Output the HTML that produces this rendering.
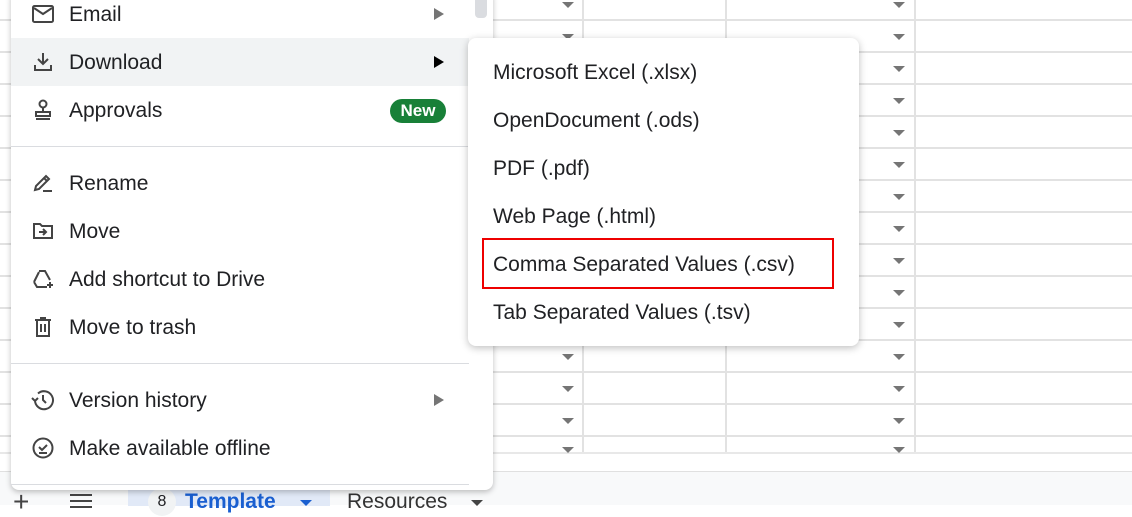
<!DOCTYPE html>
<html><head><style>
*{margin:0;padding:0;box-sizing:border-box}
body{width:1132px;height:505px;overflow:hidden;background:#fff;position:relative;font-family:"Liberation Sans",Arial,sans-serif;color:#202124}
.hl{position:absolute;left:0;width:1132px;height:2px;background:#e2e2e2}
.vl{position:absolute;top:0;height:452px;width:2px;background:#e2e2e2}
.arr{position:absolute;width:0;height:0;border-left:6px solid transparent;border-right:6px solid transparent;border-top:6px solid #757575}
.bar{position:absolute;left:0;top:471px;width:1132px;height:34px;background:#f8f9fa;border-top:1px solid #e0e0e0}
.menu{position:absolute;left:11px;top:-10px;width:482px;height:500px;background:#fff;border-radius:8px;box-shadow:0 2px 6px rgba(0,0,0,.25)}
.it{position:absolute;left:0;width:458px;height:48px;font-size:21px;line-height:50px}
.it span{position:absolute;left:58px}
.it svg{position:absolute;left:20px;top:12px}
.tri{position:absolute;left:423px;top:18px;width:0;height:0;border-top:6px solid transparent;border-bottom:6px solid transparent;border-left:10px solid #757575}
.div{position:absolute;left:0;width:458px;height:1px;background:#dadce0}
.sub{position:absolute;left:468px;top:38px;width:391px;height:308px;background:#fff;border-radius:8px;box-shadow:0 2px 8px rgba(0,0,0,.25)}
.si{position:absolute;left:25px;font-size:21px;line-height:50px;height:48px}
</style></head><body>
<div class="hl" style="top:19px"></div><div class="hl" style="top:51px"></div><div class="hl" style="top:83px"></div><div class="hl" style="top:115px"></div><div class="hl" style="top:147px"></div><div class="hl" style="top:179px"></div><div class="hl" style="top:211px"></div><div class="hl" style="top:243px"></div><div class="hl" style="top:275px"></div><div class="hl" style="top:307px"></div><div class="hl" style="top:339px"></div><div class="hl" style="top:371px"></div><div class="hl" style="top:403px"></div><div class="hl" style="top:435px"></div><div class="hl" style="top:452px;background:#e8e8e8"></div>
<div class="vl" style="left:582px"></div><div class="vl" style="left:725px"></div><div class="vl" style="left:914px"></div>
<div class="arr" style="left:562px;top:2px"></div><div class="arr" style="left:893px;top:2px"></div>
<div class="arr" style="left:562px;top:34px"></div><div class="arr" style="left:893px;top:34px"></div>
<div class="arr" style="left:893px;top:66px"></div><div class="arr" style="left:893px;top:98px"></div><div class="arr" style="left:893px;top:130px"></div><div class="arr" style="left:893px;top:162px"></div><div class="arr" style="left:893px;top:194px"></div><div class="arr" style="left:893px;top:226px"></div><div class="arr" style="left:893px;top:258px"></div><div class="arr" style="left:893px;top:290px"></div><div class="arr" style="left:893px;top:322px"></div>
<div class="arr" style="left:562px;top:354px"></div><div class="arr" style="left:893px;top:354px"></div><div class="arr" style="left:562px;top:386px"></div><div class="arr" style="left:893px;top:386px"></div><div class="arr" style="left:562px;top:418px"></div><div class="arr" style="left:893px;top:418px"></div><div class="arr" style="left:562px;top:447px"></div><div class="arr" style="left:893px;top:447px"></div>
<div class="bar">
<div style="position:absolute;left:13px;top:20px;font-size:28px;line-height:20px;color:#444">+</div>
<div style="position:absolute;left:70px;top:28px;width:22px;height:2px;background:#444;box-shadow:0 6px 0 #444,0 -6px 0 #444"></div>
<div style="position:absolute;left:128px;top:0;width:202px;height:34px;background:#e1e9f7"></div>
<div style="position:absolute;left:148px;top:16px;width:28px;height:28px;border-radius:14px;background:#f1f3f4;font-size:16px;text-align:center;line-height:28px">8</div>
<div style="position:absolute;left:185px;top:18px;font-size:21px;font-weight:bold;color:#1a5fd0">Template</div>
<div style="position:absolute;left:300px;top:28px;border-left:6px solid transparent;border-right:6px solid transparent;border-top:6px solid #1a5fd0"></div>
<div style="position:absolute;left:347px;top:18px;font-size:21px;color:#333">Resources</div>
<div style="position:absolute;left:471px;top:28px;border-left:6px solid transparent;border-right:6px solid transparent;border-top:6px solid #444"></div>
</div>
<div class="menu">
<div style="position:absolute;left:464px;top:0;width:12px;height:28px;background:#dadce0;border-radius:0 0 4px 4px"></div>
<div class="it" style="top:0"><svg width="24" height="24" viewBox="0 0 24 24"><rect x="2" y="4" width="20" height="16" rx="1.5" fill="none" stroke="#444" stroke-width="2"/><path d="M3 6l9 6 9-6" fill="none" stroke="#444" stroke-width="2"/></svg><span>Email</span><div class="tri"></div></div>
<div class="it" style="top:48px;background:#f1f3f4;width:458px"><svg width="24" height="24" viewBox="0 0 24 24"><path d="M12 3v11M7 9l5 5 5-5M4 15v5h16v-5" fill="none" stroke="#444" stroke-width="2"/></svg><span>Download</span><div class="tri" style="border-left-color:#000"></div></div>
<div class="it" style="top:96px"><svg width="24" height="24" viewBox="0 0 24 24"><circle cx="12" cy="6" r="3.5" fill="none" stroke="#444" stroke-width="2"/><path d="M12 10v4M5 14h14v4H5zM5 21h14" fill="none" stroke="#444" stroke-width="2"/></svg><span>Approvals</span><div style="position:absolute;left:379px;top:13px;width:56px;height:24px;border-radius:12px;background:#188038;color:#fff;font-weight:bold;font-size:17px;line-height:24px;text-align:center">New</div></div>
<div class="div" style="top:156px"></div>
<div class="it" style="top:169px"><svg width="24" height="24" viewBox="0 0 24 24"><path d="M4 19l1-4L15 5l3 3L8 18zM13 7l3 3M12 20h9" fill="none" stroke="#444" stroke-width="2"/></svg><span>Rename</span></div>
<div class="it" style="top:217px"><svg width="24" height="24" viewBox="0 0 24 24"><path d="M3 5h6l2 2h10v12H3z" fill="none" stroke="#444" stroke-width="2"/><path d="M8 13h7M12 10l3 3-3 3" fill="none" stroke="#444" stroke-width="2"/></svg><span>Move</span></div>
<div class="it" style="top:265px"><svg width="24" height="24" viewBox="0 0 24 24"><path d="M8 4h6l5 9M3 15l5-10M3 15l3 5h10" fill="none" stroke="#444" stroke-width="2"/><path d="M19 15v6M16 18h6" stroke="#444" stroke-width="2"/></svg><span>Add shortcut to Drive</span></div>
<div class="it" style="top:313px"><svg width="24" height="24" viewBox="0 0 24 24"><path d="M4 5h16M9 3h6M6 5v16h12V5M10 9v8M14 9v8" fill="none" stroke="#444" stroke-width="2"/></svg><span>Move to trash</span></div>
<div class="div" style="top:373px"></div>
<div class="it" style="top:386px"><svg width="24" height="24" viewBox="0 0 24 24"><path d="M4 12a9 9 0 1 0 3-6.5M1 10l3 3 3-3M12 7v5l3 3" fill="none" stroke="#444" stroke-width="2"/></svg><span>Version history</span><div class="tri"></div></div>
<div class="it" style="top:434px"><svg width="24" height="24" viewBox="0 0 24 24"><circle cx="12" cy="12" r="9.5" fill="none" stroke="#444" stroke-width="2"/><path d="M8 11l3 3 5-5M8 17h8" fill="none" stroke="#444" stroke-width="2"/></svg><span>Make available offline</span></div>
<div class="div" style="top:494px"></div>
</div>
<div class="sub">
<div class="si" style="top:10px">Microsoft Excel (.xlsx)</div>
<div class="si" style="top:58px">OpenDocument (.ods)</div>
<div class="si" style="top:106px">PDF (.pdf)</div>
<div class="si" style="top:154px">Web Page (.html)</div>
<div class="si" style="top:202px">Comma Separated Values (.csv)</div>
<div class="si" style="top:250px">Tab Separated Values (.tsv)</div>
<div style="position:absolute;left:14px;top:200px;width:352px;height:51px;border:2px solid #e00"></div>
</div>
</body></html>
